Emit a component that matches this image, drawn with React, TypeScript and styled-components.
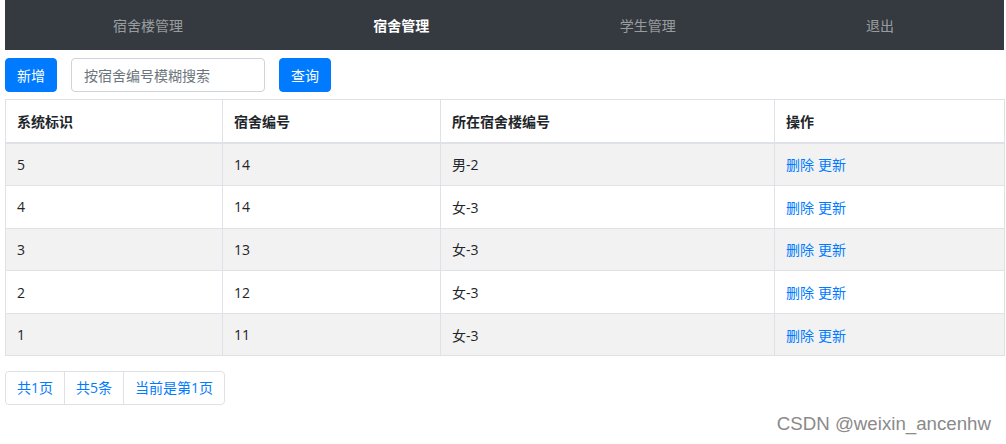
import React, { useState } from 'react';
import styled, { createGlobalStyle } from 'styled-components';

interface Room {
  id: number;
  roomNo: string;
  building: string;
}

const rooms: Room[] = [
  { id: 5, roomNo: '14', building: '男-2' },
  { id: 4, roomNo: '14', building: '女-3' },
  { id: 3, roomNo: '13', building: '女-3' },
  { id: 2, roomNo: '12', building: '女-3' },
  { id: 1, roomNo: '11', building: '女-3' }
];

const navItems = ['宿舍楼管理', '宿舍管理', '学生管理', '退出'];

const GlobalStyle = createGlobalStyle`
  body {
    margin: 0;
    background: #fff;
    font-family: "Open Sans", "Noto Sans CJK SC", sans-serif;
    font-size: 14px;
    color: #212529;
  }
`;

const Page = styled.div`
  padding: 0 2px 0 5px;
`;

const NavBar = styled.nav`
  display: flex;
  align-items: center;
  justify-content: space-between;
  height: 50px;
  padding: 0 110px 0 108px;
  background-color: #343a40;
`;

const NavLink = styled.a<{ $active?: boolean }>`
  font-size: 14px;
  font-family: "Noto Sans CJK SC", sans-serif;
  color: ${({ $active }) => ($active ? '#ffffff' : 'rgba(255, 255, 255, 0.5)')};
  font-weight: ${({ $active }) => ($active ? 700 : 400)};
  text-decoration: none;
  cursor: pointer;
`;

const Toolbar = styled.div`
  display: flex;
  align-items: center;
  gap: 14px;
  margin-top: 8px;
`;

const Button = styled.button`
  height: 34px;
  padding: 0 11px;
  border: 1px solid #007bff;
  border-radius: 4px;
  background-color: #007bff;
  color: #fff;
  font-size: 14px;
  font-family: "Noto Sans CJK SC", sans-serif;
  cursor: pointer;
`;

const SearchInput = styled.input`
  box-sizing: border-box;
  width: 194px;
  height: 34px;
  padding: 0 12px;
  border: 1px solid #ced4da;
  border-radius: 4px;
  font-size: 14px;
  font-family: "Noto Sans CJK SC", sans-serif;
  color: #495057;
  outline: none;

  &::placeholder {
    color: #6c757d;
  }
`;

const Table = styled.table`
  width: 999px;
  margin-top: 7px;
  border-collapse: collapse;
  table-layout: fixed;
`;

const Th = styled.th<{ $width: number }>`
  width: ${({ $width }) => $width}px;
  height: 43px;
  padding: 0 11px;
  box-sizing: border-box;
  text-align: left;
  font-weight: 700;
  border: 1px solid #dee2e6;
  border-bottom-width: 2px;
`;

const Row = styled.tr<{ $striped: boolean }>`
  background-color: ${({ $striped }) => ($striped ? '#f2f2f2' : '#fff')};
`;

const Td = styled.td`
  height: 41.6px;
  padding: 0 11px;
  border: 1px solid #dee2e6;
`;

const ActionLink = styled.a`
  color: #007bff;
  text-decoration: none;
  cursor: pointer;
  margin-right: 4px;
`;

const Pagination = styled.ul`
  display: inline-flex;
  list-style: none;
  margin: 15px 0 0;
  padding: 0;
  border: 1px solid #dee2e6;
  border-radius: 4px;
`;

const PageItem = styled.li`
  height: 32px;
  line-height: 32px;
  padding: 0 11px;
  color: #007bff;
  border-left: 1px solid #dee2e6;

  &:first-child {
    border-left: none;
  }
`;

const Watermark = styled.div`
  display: flex;
  justify-content: flex-end;
  padding: 8px 13px 0 0;
  font-family: "Liberation Sans", Arial, sans-serif;
  font-size: 18.7px;
  color: #8a8a8a;
`;

const App: React.FC = () => {
  const [keyword, setKeyword] = useState('');

  return (
    <>
      <GlobalStyle />
      <Page>
        <NavBar>
          {navItems.map((item) => (
            <NavLink key={item} $active={item === '宿舍管理'}>
              {item}
            </NavLink>
          ))}
        </NavBar>
        <Toolbar>
          <Button>新增</Button>
          <SearchInput
            value={keyword}
            onChange={(e) => setKeyword(e.target.value)}
            placeholder="按宿舍编号模糊搜索"
          />
          <Button>查询</Button>
        </Toolbar>
        <Table>
          <thead>
            <tr>
              <Th $width={217}>系统标识</Th>
              <Th $width={218}>宿舍编号</Th>
              <Th $width={334}>所在宿舍楼编号</Th>
              <Th $width={230}>操作</Th>
            </tr>
          </thead>
          <tbody>
            {rooms.map((room, i) => (
              <Row key={room.id} $striped={i % 2 === 0}>
                <Td>{room.id}</Td>
                <Td>{room.roomNo}</Td>
                <Td>{room.building}</Td>
                <Td>
                  <ActionLink>删除</ActionLink>
                  <ActionLink>更新</ActionLink>
                </Td>
              </Row>
            ))}
          </tbody>
        </Table>
        <Pagination>
          <PageItem>共1页</PageItem>
          <PageItem>共5条</PageItem>
          <PageItem>当前是第1页</PageItem>
        </Pagination>
        <Watermark>CSDN @weixin_ancenhw</Watermark>
      </Page>
    </>
  );
};

export default App;
